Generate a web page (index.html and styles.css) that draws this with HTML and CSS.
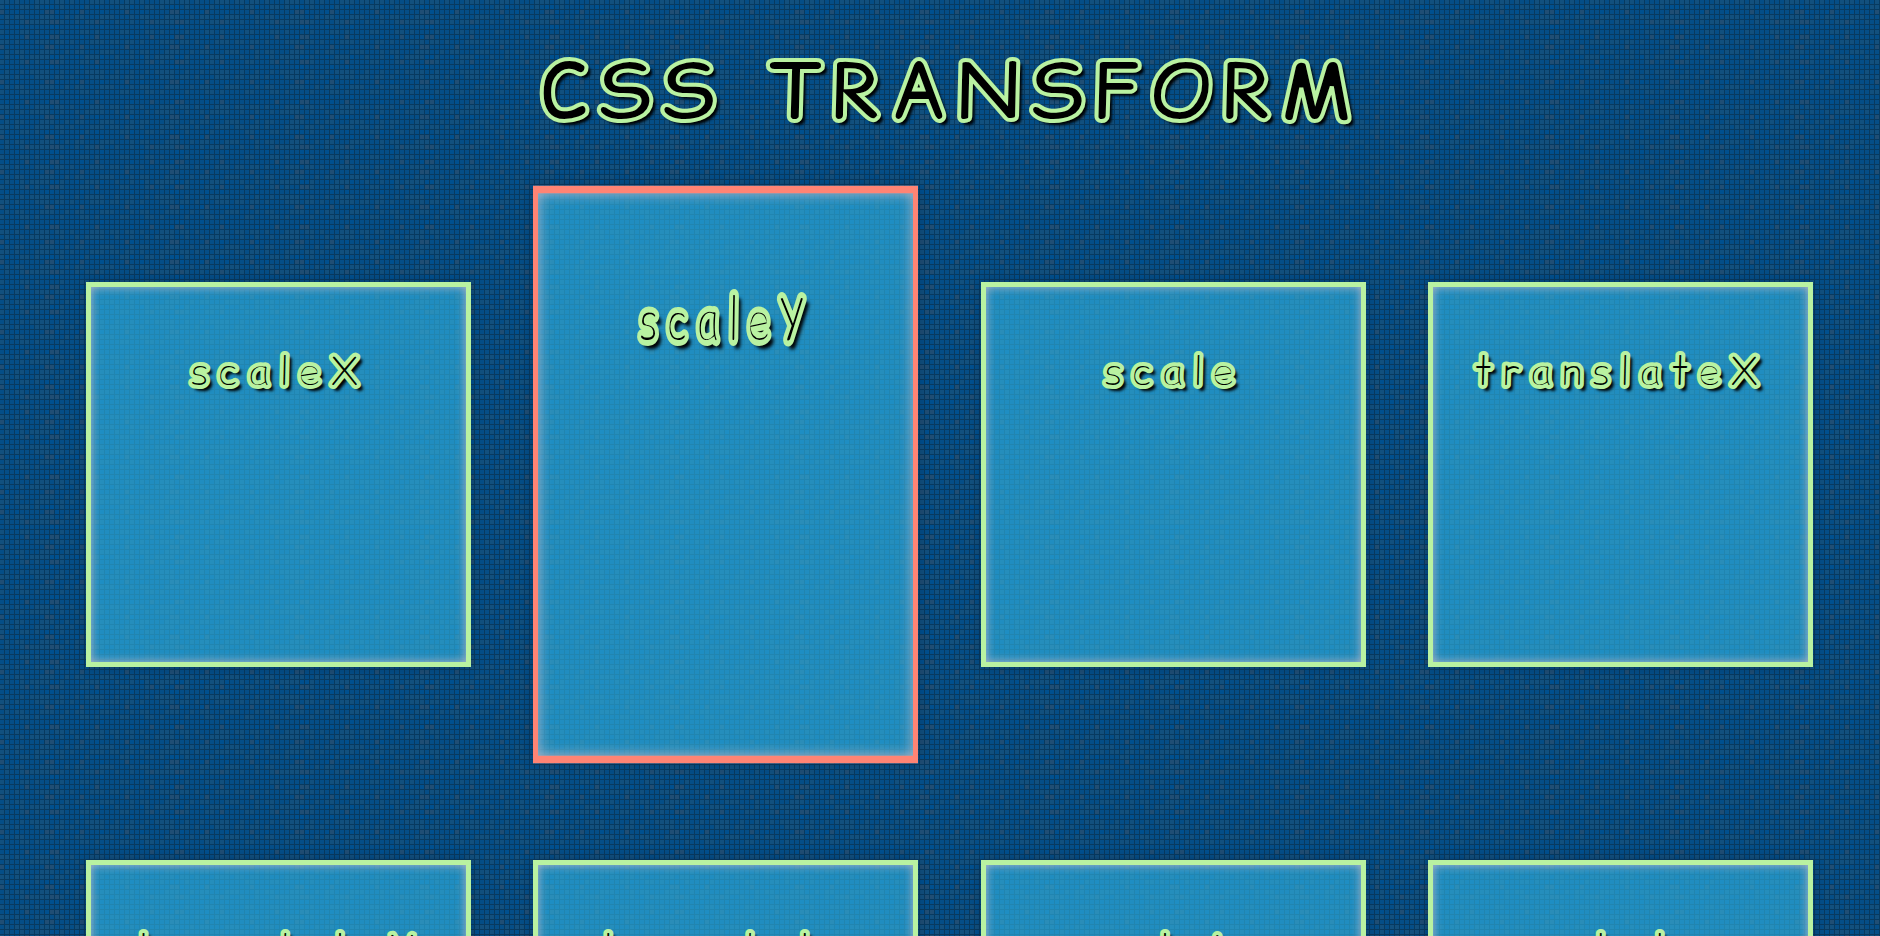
FILE: index.html
```
<!DOCTYPE html>
<html lang="en">
<head>
<meta charset="utf-8">
<title>CSS Transform</title>
<link rel="stylesheet" href="styles.css">
</head>
<body>
<h1 class="title">CSS TRANSFORM</h1>
<main class="grid">
<section class="box"><h2 class="label">scaleX</h2></section>
<section class="box box-active"><h2 class="label">scaleY</h2></section>
<section class="box"><h2 class="label">scale</h2></section>
<section class="box"><h2 class="label">translateX</h2></section>
<section class="box"><h2 class="label">translateY</h2></section>
<section class="box"><h2 class="label">translate</h2></section>
<section class="box"><h2 class="label">matrix</h2></section>
<section class="box"><h2 class="label">rotate</h2></section>
</main>
</body>
</html>
```
FILE: styles.css
```
* { box-sizing: border-box; }
html { height: 100%; overflow: hidden; }
body {
  height: 100%;
  margin: 0;
  overflow: hidden;
  font-family: "Comic Sans MS", "Comic Relief", "Comic Neue", cursive;
  background-color: #054e87;
  background-image:
    repeating-linear-gradient(90deg, transparent 0 4px, #083a60 4px 5px),
    repeating-linear-gradient(transparent 0 4px, #083a60 4px 5px),
    url("data:image/svg+xml,%3Csvg xmlns='http://www.w3.org/2000/svg' width='125' height='125'%3E%3Cg stroke-width='5' fill='none'%3E%3Cg stroke='%2312507e'%3E%3Cpath stroke-dasharray='10 5 5 15 15 5' d='M0 2.5H125M0 42.5H125M0 77.5H125M0 107.5H125'/%3E%3Cpath stroke-dasharray='5 15 10 5 5 20' d='M0 7.5H125M0 32.5H125M0 62.5H125M0 92.5H125'/%3E%3Cpath stroke-dasharray='15 10 5 5 10 15' stroke-dashoffset='20' d='M0 17.5H125M0 52.5H125M0 87.5H125M0 122.5H125'/%3E%3Cpath stroke-dasharray='5 5 20 10 5 10' stroke-dashoffset='35' d='M0 22.5H125M0 57.5H125M0 72.5H125M0 112.5H125'/%3E%3C/g%3E%3Cg stroke='%2300508f'%3E%3Cpath stroke-dasharray='5 20 5 30 10 15' stroke-dashoffset='10' d='M0 12.5H125M0 27.5H125M0 57.5H125M0 82.5H125M0 97.5H125'/%3E%3Cpath stroke-dasharray='10 25 5 10 5 35' stroke-dashoffset='45' d='M0 7.5H125M0 37.5H125M0 67.5H125M0 102.5H125M0 117.5H125'/%3E%3C/g%3E%3Cg stroke='%23204e74'%3E%3Cpath stroke-dasharray='5 40 10 25 5 40' d='M0 12.5H125M0 47.5H125M0 82.5H125M0 117.5H125'/%3E%3Cpath stroke-dasharray='10 35 5 50 5 20' stroke-dashoffset='75' d='M0 22.5H125M0 37.5H125M0 62.5H125M0 102.5H125'/%3E%3C/g%3E%3C/g%3E%3C/svg%3E");
}
.title {
  margin: 0;
  padding: 21px 0 0 19px;
  font-size: 80px;
  line-height: 140px;
  text-align: center;
  letter-spacing: 8px;
  color: #000;
  -webkit-text-stroke: 4px #b9f2a1;
  text-shadow: 4px 4px 3px #000;
}
.grid {
  display: grid;
  grid-template-columns: repeat(4, 385px);
  justify-content: space-between;
  row-gap: 193px;
  padding: 121px 67px 100px 86px;
}
.box {
  height: 385px;
  padding-top: 49px;
  border: 5px solid #b9f2a1;
  background: rgba(50, 184, 230, .6);
  box-shadow: inset 0 0 10px #b9b9c9, 0 0 10px rgba(0, 30, 60, .4);
}
.box-active { transform: scaleY(1.5); border-color: #ff8474; }
.label {
  margin: 0;
  font-size: 42px;
  font-weight: 700;
  line-height: 70px;
  text-align: center;
  letter-spacing: 8px;
  color: #000;
  -webkit-text-stroke: 4px #b9f2a1;
  text-shadow: 4px 4px 3px #000;
}
```
